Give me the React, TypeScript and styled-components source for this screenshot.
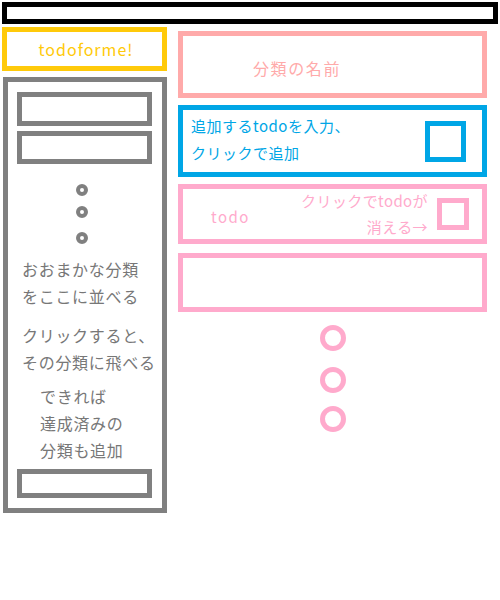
import styled, { createGlobalStyle } from "styled-components";

const GlobalStyle = createGlobalStyle`
    body {
        margin: 0;
        background: #ffffff;
        font-family: "Noto Sans CJK JP", "Noto Sans", sans-serif;
    }
`

const Page = styled.div`
    width: 500px;
    height: 600px;
    padding: 2px;
    box-sizing: border-box;
`

const TopBar = styled.div`
    width: 496px;
    height: 22px;
    box-sizing: border-box;
    border: 5px solid #000000;
`

const Columns = styled.div`
    display: flex;
    flex-direction: row;
    gap: 11px;
    margin-top: 3px;
`

const SideColumn = styled.div`
    width: 165px;
    display: flex;
    flex-direction: column;
`

const MainColumn = styled.div`
    width: 309px;
    padding-top: 4px;
    display: flex;
    flex-direction: column;
`

const Logo = styled.div`
    height: 44px;
    box-sizing: border-box;
    border: 5px solid #ffca0a;
    color: #ffca0a;
    font-size: 16px;
    letter-spacing: 1px;
    display: flex;
    align-items: center;
    justify-content: center;
    padding-left: 3px;
`

const SidePanel = styled.div`
    margin-top: 6px;
    margin-left: 1px;
    width: 164px;
    height: 436px;
    box-sizing: border-box;
    border: 5px solid #808080;
    padding: 10px 10px 10px 9px;
    display: flex;
    flex-direction: column;
`

const SideItem = styled.div<{ top?: number, h: number }>`
    flex-shrink: 0;
    height: ${({ h }) => h}px;
    margin-top: ${({ top }) => top ?? 0}px;
    box-sizing: border-box;
    border: 5px solid #808080;
`

const Ring = styled.div<{ size: number, thick: number, color: string, top: number, shift?: number }>`
    flex-shrink: 0;
    width: ${({ size }) => size}px;
    height: ${({ size }) => size}px;
    box-sizing: border-box;
    border-radius: 50%;
    border: ${({ thick, color }) => `${thick}px solid ${color}`};
    margin-top: ${({ top }) => top}px;
    align-self: center;
    position: relative;
    left: ${({ shift }) => shift ?? 0}px;
`

const Note = styled.div<{ indent?: number, top?: number }>`
    flex-shrink: 0;
    white-space: nowrap;
    color: #777777;
    font-size: 16px;
    letter-spacing: 0.7px;
    line-height: 27px;
    padding-left: ${({ indent }) => indent ?? 5}px;
    margin-top: ${({ top }) => top ?? 0}px;
`

const Spacer = styled.div`
    flex: 1;
`

const CategoryName = styled.div`
    height: 67px;
    box-sizing: border-box;
    border: 5px solid #ffaaaa;
    color: #ffaaaa;
    font-size: 16px;
    letter-spacing: 1.6px;
    display: flex;
    align-items: center;
    padding: 6px 0 0 70px;
`

const AddBox = styled.div`
    margin-top: 7px;
    height: 72px;
    box-sizing: border-box;
    border: 5px solid #00a6e6;
    display: flex;
    align-items: center;
    justify-content: space-between;
    padding: 0 16px 0 8px;
`

const AddText = styled.div`
    color: #00a6e6;
    font-size: 15px;
    line-height: 27px;
    letter-spacing: 0.5px;
    margin-top: -5px;
`

const CheckBox = styled.div<{ size: number, color: string }>`
    width: ${({ size }) => size}px;
    height: ${({ size }) => size}px;
    box-sizing: border-box;
    border: 5px solid ${({ color }) => color};
    flex-shrink: 0;
`

const TodoRow = styled.div<{ top: number, h: number }>`
    margin-top: ${({ top }) => top}px;
    height: ${({ h }) => h}px;
    box-sizing: border-box;
    border: 5px solid #ffaacc;
    display: flex;
    align-items: center;
    padding: 0 13px 0 28px;
    color: #ffaacc;
    font-size: 15px;
`

const TodoLabel = styled.div`
    flex: 1;
    letter-spacing: 1.5px;
    margin-top: 4px;
`

const TodoHint = styled.div`
    text-align: right;
    line-height: 26px;
    margin-right: 9px;
    letter-spacing: 0.4px;
`

const RingList = styled.div`
    display: flex;
    flex-direction: column;
`

function App() {
    return (
        <>
            <GlobalStyle />
            <Page>
                <TopBar />
                <Columns>
                    <SideColumn>
                        <Logo>todoforme!</Logo>
                        <SidePanel>
                            <SideItem h={34} />
                            <SideItem h={33} top={5} />
                            <Ring size={12} thick={4} color="#808080" top={20} shift={-3} />
                            <Ring size={12} thick={4} color="#808080" top={10} shift={-3} />
                            <Ring size={12} thick={4} color="#808080" top={14} shift={-3} />
                            <Note top={12}>おおまかな分類<br />をここに並べる</Note>
                            <Note top={12}>クリックすると、<br />その分類に飛べる</Note>
                            <Note top={7} indent={23}>できれば<br />達成済みの<br />分類も追加</Note>
                            <Spacer />
                            <SideItem h={29} />
                        </SidePanel>
                    </SideColumn>
                    <MainColumn>
                        <CategoryName>分類の名前</CategoryName>
                        <AddBox>
                            <AddText>追加するtodoを入力、<br />クリックで追加</AddText>
                            <CheckBox size={41} color="#00a6e6" />
                        </AddBox>
                        <TodoRow top={7} h={60}>
                            <TodoLabel>todo</TodoLabel>
                            <TodoHint>クリックでtodoが<br />消える→</TodoHint>
                            <CheckBox size={32} color="#ffaacc" />
                        </TodoRow>
                        <TodoRow top={9} h={59} />
                        <RingList>
                            <Ring size={26} thick={5} color="#ffaacc" top={13} />
                            <Ring size={26} thick={5} color="#ffaacc" top={16} />
                            <Ring size={26} thick={5} color="#ffaacc" top={13} />
                        </RingList>
                    </MainColumn>
                </Columns>
            </Page>
        </>
    );
}

export default App;
